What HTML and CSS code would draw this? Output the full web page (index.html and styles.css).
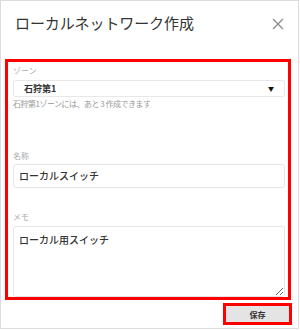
FILE: index.html
```html
<!DOCTYPE html>
<html lang="ja">
<head>
<meta charset="utf-8">
<link rel="stylesheet" href="styles.css">
</head>
<body>
<div class="dialog">
  <header class="head">
    <h1 class="title">ローカルネットワーク作成</h1>
    <button class="close" aria-label="閉じる">
      <svg width="12" height="12" viewBox="0 0 12 12"><path d="M1 1L11 11M11 1L1 11" stroke="#8a8a8a" stroke-width="1.3" fill="none"/></svg>
    </button>
  </header>
  <section class="form">
    <label class="lbl">ゾーン</label>
    <div class="select"><span class="sel-text">石狩第1</span><span class="caret">▼</span></div>
    <p class="help">石狩第1ゾーンには、あと 3 作成できます</p>
    <label class="lbl lbl-name">名称</label>
    <div class="input">ローカルスイッチ</div>
    <label class="lbl lbl-memo">メモ</label>
    <textarea class="memo">ローカル用スイッチ</textarea>
  </section>
  <footer class="foot">
    <div class="btn-wrap"><button class="save">保存</button></div>
  </footer>
</div>
</body>
</html>
```

FILE: styles.css
```css
html, body {
  margin: 0;
  padding: 0;
  background: #fff;
}
body {
  font-family: "Noto Sans CJK JP", "Noto Sans", sans-serif;
  color: #333;
}
.dialog {
  box-sizing: border-box;
  width: 299px;
  height: 329px;
  border: 1px solid #dcdcdc;
  display: flex;
  flex-direction: column;
}
.head {
  display: flex;
  justify-content: space-between;
  height: 58px;
  padding: 0 14px 0 14px;
  box-sizing: border-box;
  align-items: flex-start;
}
.title {
  margin: 12px 0 0;
  font-size: 15px;
  font-weight: normal;
  line-height: 20px;
  color: #333;
  letter-spacing: -0.1px;
}
.close {
  margin-top: 17px;
  padding: 0;
  border: 0;
  background: none;
  width: 12px;
  height: 12px;
  display: flex;
}
.form {
  box-sizing: border-box;
  margin-left: 4px;
  width: 286px;
  height: 241px;
  border: 3px solid #ff0000;
  padding: 3px 3px 0 5px;
  display: flex;
  flex-direction: column;
  overflow: hidden;
}
.lbl {
  font-size: 8px;
  line-height: 12px;
  color: #aaa;
}
.select {
  margin-top: 3px;
  box-sizing: border-box;
  height: 18px;
  border: 1px solid #e8e8e8;
  border-radius: 3px;
  display: flex;
  align-items: center;
  justify-content: space-between;
  padding: 0 10px 0 10px;
}
.sel-text {
  font-size: 9px;
  font-weight: bold;
  color: #333;
}
.caret {
  font-size: 6px;
  color: #111;
}
.help {
  margin: 1px 0 0;
  font-size: 8px;
  line-height: 11px;
  color: #999;
  letter-spacing: -0.5px;
}
.lbl-name {
  margin-top: 41px;
}
.input {
  margin-top: 2px;
  box-sizing: border-box;
  height: 24px;
  border: 1px solid #e6e6e6;
  border-radius: 3px;
  padding: 0 5px;
  font-size: 10px;
  line-height: 22px;
  font-weight: 500;
  color: #333;
}
.lbl-memo {
  margin-top: 23px;
}
.memo {
  margin: 3px 0 0;
  box-sizing: border-box;
  height: 71px;
  width: 100%;
  border: 1px solid #e6e6e6;
  border-radius: 3px;
  padding: 6px 5px;
  font-family: "Noto Sans CJK JP", "Noto Sans", sans-serif;
  font-size: 10px;
  line-height: 14px;
  font-weight: 500;
  color: #333;
  resize: vertical;
  flex: none;
}
.foot {
  display: flex;
  justify-content: flex-end;
  padding: 3px 6px 0 0;
}
.btn-wrap {
  box-sizing: border-box;
  width: 69px;
  height: 22px;
  border: 3px solid #ff0000;
  display: flex;
}
.save {
  flex: 1;
  border: 0;
  margin: 0;
  padding: 0;
  background: #e4e4e4;
  font-family: "Noto Sans CJK JP", "Noto Sans", sans-serif;
  font-size: 8px;
  font-weight: bold;
  color: #333;
}
```
